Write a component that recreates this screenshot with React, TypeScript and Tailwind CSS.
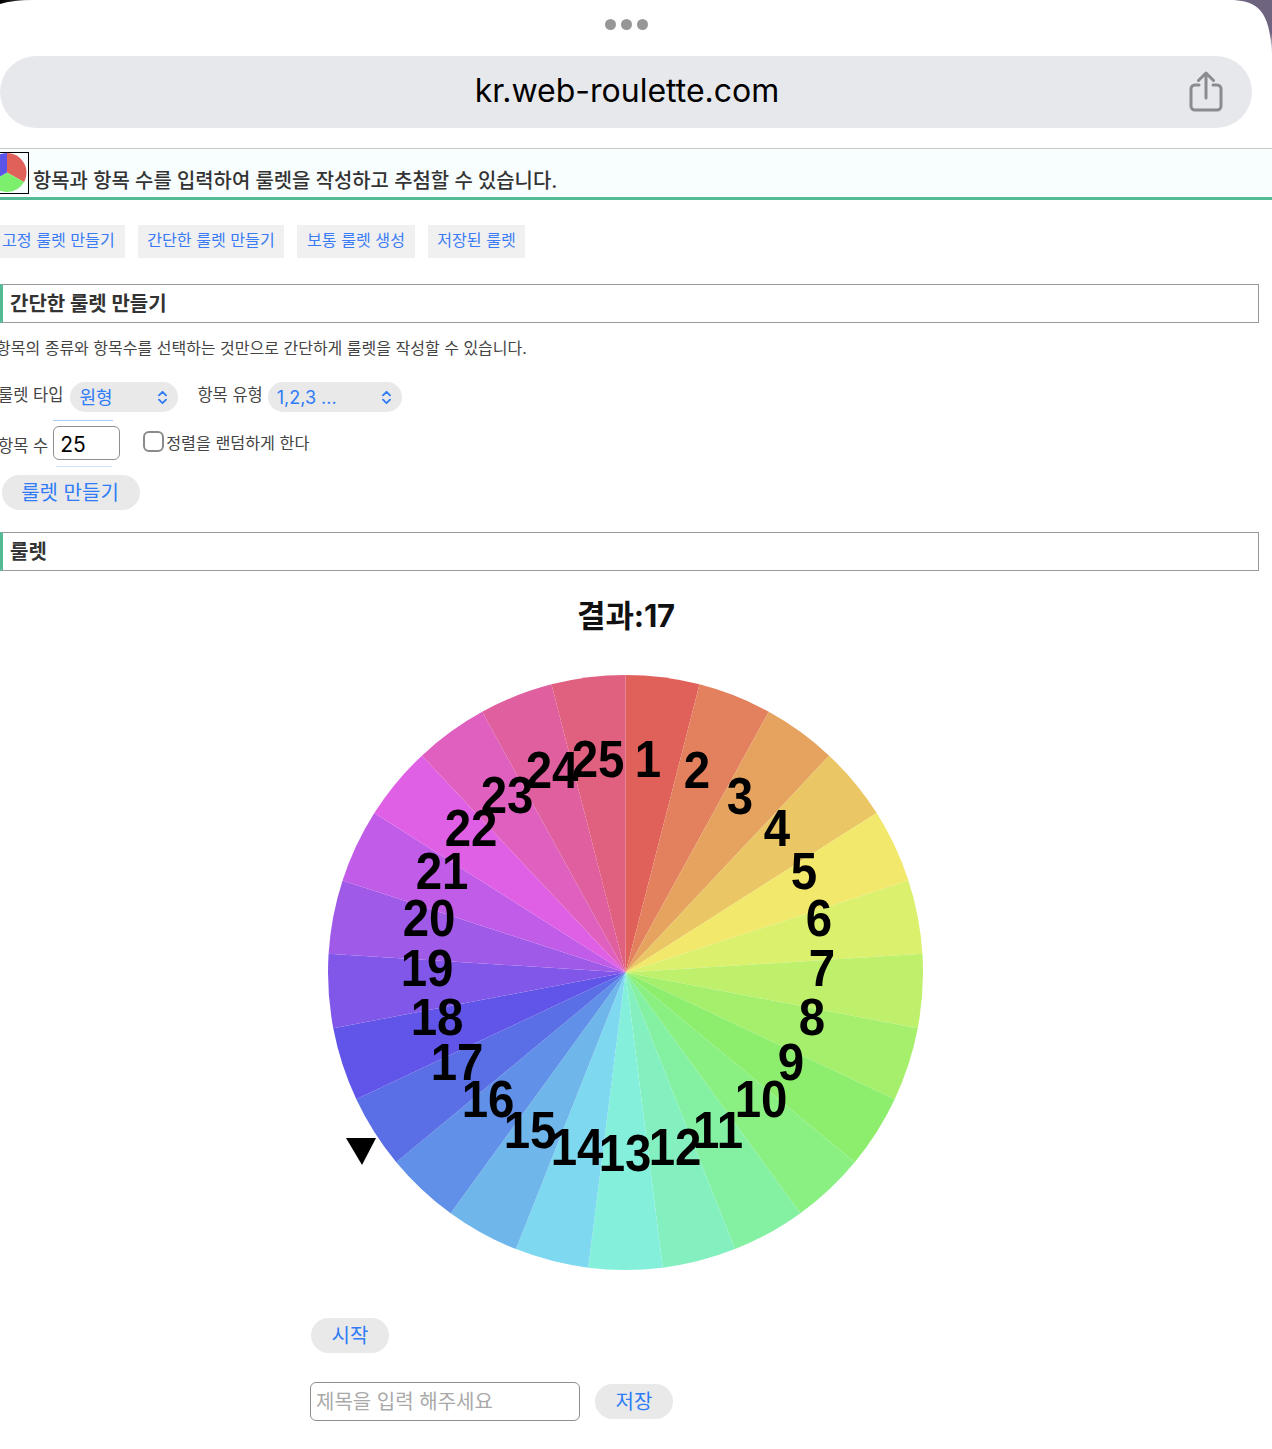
import React from "react";
import { ChevronsUpDown } from "lucide-react";

const KR = "font-['Inter','Noto_Sans_CJK_KR',sans-serif]";

const COLORS = [
  "#e0605a", "#e3815e", "#e6a360", "#eac664", "#f2e86c", "#dbf06c", "#bef06c", "#a6ef6c", "#8cee6c",
  "#8af082", "#84f0a2", "#84f0c0", "#84f0dc", "#7ed9f0", "#6fb6ea", "#6090e8", "#5a6ee6", "#6055e8",
  "#8057e8", "#a05ae8", "#c05ce8", "#df5fe5", "#e060c0", "#e0609f", "#e06080",
];

// label centres, read off the reference, relative to the wheel svg box
const LABELS: [number, number][] = [
  [648, 759], [697, 770], [740, 796], [777, 828], [804, 871], [819, 918], [822, 968], [812, 1017], [791, 1062],
  [761, 1099], [718, 1130], [675, 1147], [625, 1153], [577, 1147], [530, 1130], [488, 1099], [457, 1062],
  [437, 1017], [427, 968], [429, 918], [442, 871], [471, 828], [507, 795], [552, 770], [598, 759],
];

function wedge(i: number) {
  const cx = 325.5;
  const cy = 322.5;
  const r = 297.5;
  const a0 = (i * 14.4 * Math.PI) / 180;
  const a1 = ((i + 1) * 14.4 * Math.PI) / 180;
  const x0 = cx + r * Math.sin(a0);
  const y0 = cy - r * Math.cos(a0);
  const x1 = cx + r * Math.sin(a1);
  const y1 = cy - r * Math.cos(a1);
  return `M${cx} ${cy}L${x0} ${y0}A${r} ${r} 0 0 1 ${x1} ${y1}Z`;
}

function Wheel() {
  return (
    <svg width="650" height="650" viewBox="0 0 650 650" className="block">
      {COLORS.map((c, i) => (
        <path key={i} d={wedge(i)} fill={c} />
      ))}
      {LABELS.map(([x, y], i) => (
        <text
          key={i}
          transform={`translate(${x - 300} ${y - 650 + 18}) scale(0.93 1)`}
          textAnchor="middle"
          fontFamily="'Liberation Sans', Arial, sans-serif"
          fontWeight="700"
          fontSize="51"
          fill="#000"
        >
          {i + 1}
        </text>
      ))}
      <polygon points="46,488 76,488 62,515" fill="#000" />
    </svg>
  );
}

function SectionTitle({ children }: { children: React.ReactNode }) {
  return (
    <h2 className="h-[39px] w-[1259px] border border-l-[3px] border-[#999] border-l-[#55bb94] pl-[7px] text-[20px] leading-[38px] font-bold text-[#333]">
      {children}
    </h2>
  );
}

function Tab({ children, className = "" }: { children: React.ReactNode; className?: string }) {
  return (
    <a className={`flex h-[33px] items-center bg-[#f0f0f0] pb-[2px] text-[16.100px] text-[#3b7cf6] ${className}`}>{children}</a>
  );
}

function Pill({ children, className = "" }: { children: React.ReactNode; className?: string }) {
  return (
    <button className={`flex h-[35px] items-center justify-center rounded-full bg-[#e9e9e9] text-[20px] text-[#2f7cf6] ${className}`}>
      {children}
    </button>
  );
}

function Select({ value, className = "" }: { value: string; className?: string }) {
  return (
    <div className={`flex h-[30px] items-center justify-between rounded-full bg-[#e9e9e9] pr-[7px] pl-[9px] text-[18px] text-[#2f7cf6] ${className}`}>
      <span>{value}</span>
      <ChevronsUpDown size={17} strokeWidth={2.6} className="text-[#2f7cf6]" />
    </div>
  );
}

export default function App() {
  return (
    <div className={`relative h-[1449px] w-[1272px] overflow-hidden bg-white ${KR}`}>
      {/* device corners */}
      <svg width="40" height="6" viewBox="0 0 40 6" className="absolute top-0 left-0">
        <defs>
          <linearGradient id="cornerLeft" x1="0" x2="1" y1="0" y2="0">
            <stop offset="0" stopColor="#000" />
            <stop offset="0.4" stopColor="#222" />
            <stop offset="1" stopColor="#fff" />
          </linearGradient>
        </defs>
        <path d="M0 0H36Q12 0 0 4Z" fill="url(#cornerLeft)" />
      </svg>
      <svg width="60" height="60" viewBox="0 0 60 60" className="absolute top-0 right-0">
        <defs>
          <linearGradient id="cornerRight" x1="0" x2="0" y1="0" y2="1">
            <stop offset="0" stopColor="#6e6480" />
            <stop offset="0.6" stopColor="#6e6480" />
            <stop offset="1" stopColor="#fff" />
          </linearGradient>
        </defs>
        <path d="M22 0C44 2 58 8 60 55V0Z" fill="url(#cornerRight)" />
      </svg>

      {/* browser chrome */}
      <div className="relative flex h-[56px] w-[1252px] items-center justify-center gap-[5px] pb-[8px]">
        <span className="h-[11px] w-[11px] rounded-full bg-[#979797]" />
        <span className="h-[11px] w-[11px] rounded-full bg-[#979797]" />
        <span className="h-[11px] w-[11px] rounded-full bg-[#979797]" />
      </div>
      <div className="relative flex h-[72px] w-[1252px] items-center justify-center rounded-full bg-[#e7e8ec] pb-[2px]">
        <span className="pl-[2px] text-[32px] text-black">kr.web-roulette.com</span>
        <svg width="34" height="42" viewBox="0 0 34 42" fill="none" stroke="#888c91" strokeWidth="3" strokeLinecap="round" strokeLinejoin="round" className="absolute top-[15px] right-[29px]">
          <path d="M10 14H6a4 4 0 0 0-4 4v17a4 4 0 0 0 4 4h22a4 4 0 0 0 4-4V18a4 4 0 0 0-4-4h-4" />
          <path d="M17 27V3M9.500 9.500 17 2l7.500 7.500" />
        </svg>
      </div>

      {/* site header */}
      <header className="mt-5 flex h-[52px] items-end border-t border-b-[3px] border-t-[#c9c9c9] border-b-[#55bb94] bg-[#f8fdfe]">
        <div className="mb-[3px] -ml-[2px] h-[42px] w-[31px] shrink-0 overflow-hidden border-[1.500px] border-black">
          <svg width="48" height="39" viewBox="0 0 48 39" className="-ml-[16px] block">
            <path d="M24 19.500V0A19.500 19.500 0 0 1 41 29Z" fill="#e0605a" />
            <path d="M24 19.500 41 29A19.500 19.500 0 0 1 7 29Z" fill="#7cf06c" />
            <path d="M24 19.500 7 29A19.500 19.500 0 0 1 24 0Z" fill="#5a55e8" />
          </svg>
        </div>
        <h1 className="mb-[2px] ml-1 text-[19.900px] leading-[28px] font-medium text-[#333]">항목과 항목 수를 입력하여 룰렛을 작성하고 추첨할 수 있습니다.</h1>
      </header>

      {/* tabs */}
      <nav className="mt-[25px] flex gap-[13px]">
        <Tab className="w-[125px] pl-[2px]">고정 룰렛 만들기</Tab>
        <Tab className="w-[146px] justify-center">간단한 룰렛 만들기</Tab>
        <Tab className="w-[118px] justify-center">보통 룰렛 생성</Tab>
        <Tab className="w-[97px] justify-center">저장된 룰렛</Tab>
      </nav>

      <div className="mt-[26px]">
        <SectionTitle>간단한 룰렛 만들기</SectionTitle>
      </div>

      <p className="mt-[14px] -ml-[4px] text-[16px] leading-[22px] text-[#444]">
        항목의 종류와 항목수를 선택하는 것만으로 간단하게 룰렛을 작성할 수 있습니다.
      </p>

      {/* form */}
      <div className="mt-[23px] flex h-[30px] items-center text-[16.500px] text-[#444]">
        <span className="-mt-[3px] -ml-[2px]">룰렛 타입</span>
        <Select value="원형" className="ml-[7px] w-[108px]" />
        <span className="-mt-[3px] ml-[19px]">항목 유형</span>
        <Select value="1,2,3 ..." className="ml-[5px] w-[134px]" />
      </div>
      <div className="mt-[14px] flex h-[34px] items-center text-[16.500px] text-[#444]">
        <span className="mt-[6px] -ml-[2px]">항목 수</span>
        <div className="relative ml-[5px] h-[34px] w-[67px]">
          <span className="absolute -top-[6px] left-0 h-px w-[60px] bg-[#a9ccff]" />
          <input
            readOnly
            value="25"
            className="h-[34px] w-[67px] rounded-[6px] border border-[#8e8e8e] bg-white pt-[3px] pl-[6px] text-[21px] text-black outline-none"
          />
          <span className="absolute -bottom-[7px] left-[3px] h-px w-[56px] bg-[#cfe2ff]" />
        </div>
        <span className="-mt-[3px] ml-[23px] h-[21px] w-[21px] rounded-[6px] border-2 border-[#8a8a8a] bg-white" />
        <span className="ml-[2px] text-[16.200px]">정렬을 랜덤하게 한다</span>
      </div>
      <Pill className="mt-[15px] ml-[2px] w-[138px] pt-px pr-[2px]">룰렛 만들기</Pill>

      <div className="mt-[22px]">
        <SectionTitle>룰렛</SectionTitle>
      </div>

      {/* roulette */}
      <div className="mt-[24px] w-[1252px] text-center text-[31px] leading-[42px] font-bold tracking-[-0.200px] text-[#111]">결과:17</div>
      <div className="mt-[13px] ml-[300px]">
        <Wheel />
      </div>
      <div className="mt-[18px] ml-[310px] flex flex-col gap-[29px]">
        <Pill className="ml-[1px] w-[78px]">시작</Pill>
        <div className="flex items-center gap-[15px]">
          <input
            readOnly
            placeholder="제목을 입력 해주세요"
            className="h-[39px] w-[270px] rounded-[6px] border border-[#8e8e8e] bg-white pl-[5px] text-[20px] outline-none placeholder:text-[#a9a9a9]"
          />
          <Pill className="w-[78px]">저장</Pill>
        </div>
      </div>
    </div>
  );
}
